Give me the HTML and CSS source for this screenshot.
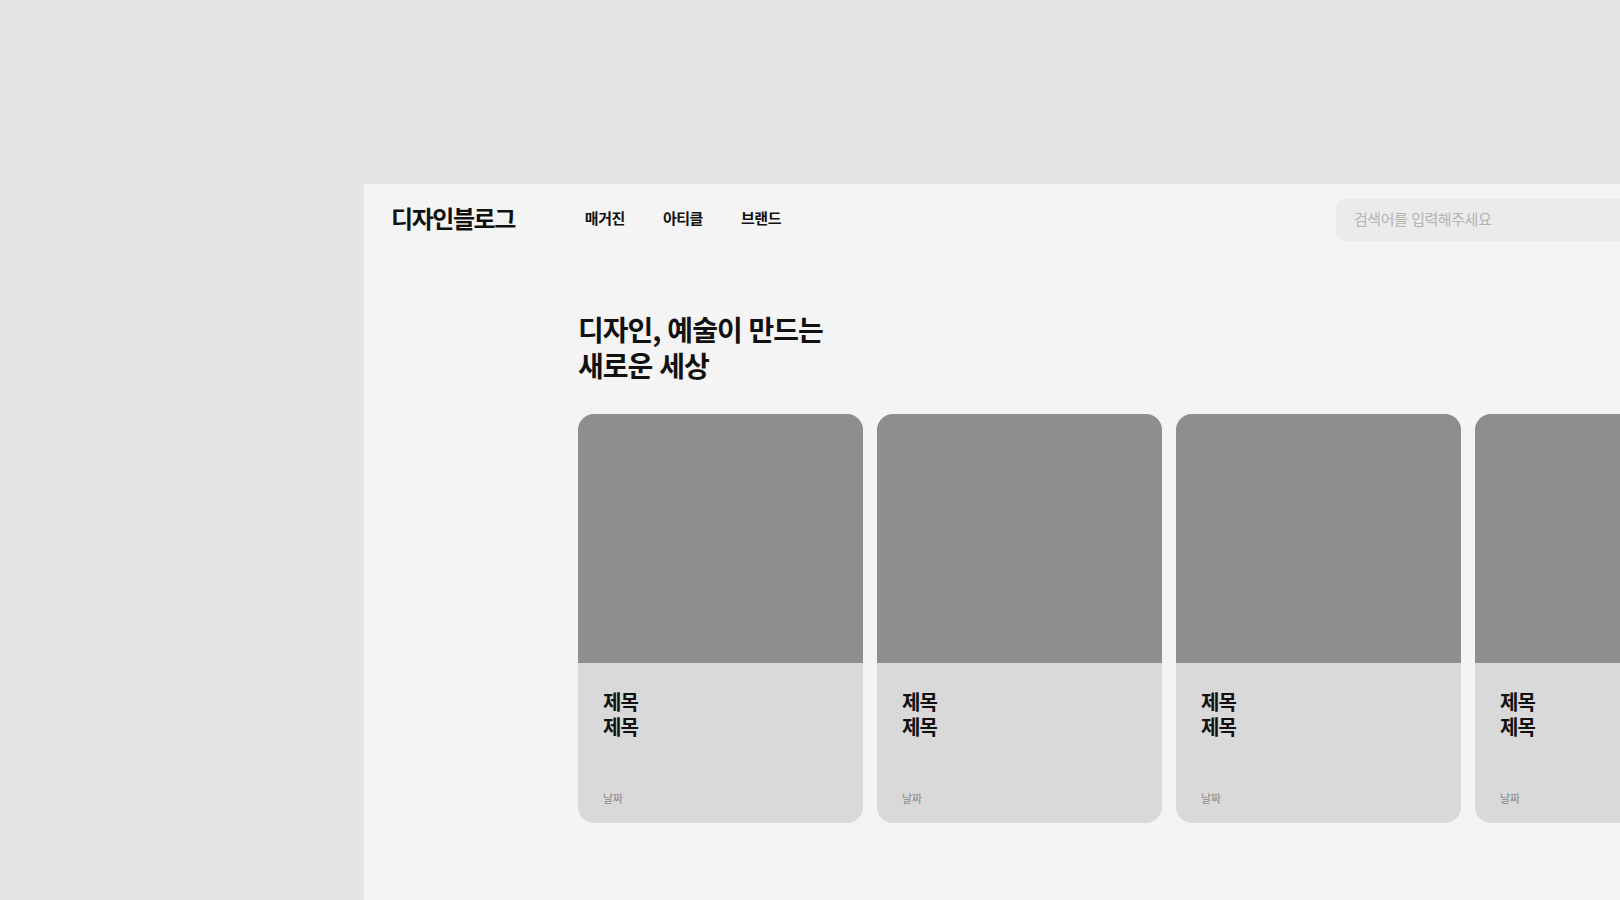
FILE: index.html
```html
<!DOCTYPE html>
<html lang="ko">
<head>
<meta charset="utf-8">
<title>디자인블로그</title>
<link rel="stylesheet" href="styles.css">
</head>
<body>
<div class="panel">
  <header class="header">
    <div class="logo">디자인블로그</div>
    <nav class="nav">
      <a class="nav-item">매거진</a>
      <a class="nav-item">아티클</a>
      <a class="nav-item">브랜드</a>
    </nav>
    <div class="search"><input class="search-input" type="text" placeholder="검색어를 입력해주세요"></div>
  </header>
  <main class="main">
    <h1 class="headline"><span class="headline-line">디자인, 예술이 만드는</span><span class="headline-line">새로운 세상</span></h1>
    <div class="cards">
      <div class="card"><div class="thumb"></div><div class="card-body"><div class="card-title"><span class="title-line">제목</span><span class="title-line">제목</span></div><div class="card-date">날짜</div></div></div>
      <div class="card"><div class="thumb"></div><div class="card-body"><div class="card-title"><span class="title-line">제목</span><span class="title-line">제목</span></div><div class="card-date">날짜</div></div></div>
      <div class="card"><div class="thumb"></div><div class="card-body"><div class="card-title"><span class="title-line">제목</span><span class="title-line">제목</span></div><div class="card-date">날짜</div></div></div>
      <div class="card"><div class="thumb"></div><div class="card-body"><div class="card-title"><span class="title-line">제목</span><span class="title-line">제목</span></div><div class="card-date">날짜</div></div></div>
    </div>
  </main>
</div>
</body>
</html>
```

FILE: styles.css
```css
html, body {
  margin: 0;
  padding: 0;
}
body {
  width: 1620px;
  height: 900px;
  overflow: hidden;
  background: #e3e4e6;
  font-family: "Noto Sans CJK KR", "Noto Sans", sans-serif;
  color: #111;
}
.panel {
  margin-left: 364px;
  margin-top: 184px;
  width: 1440px;
  height: 716px;
  background: #f4f4f4;
}
.header {
  display: flex;
  align-items: center;
  padding: 15px 0 0 27px;
  height: 42px;
}
.logo {
  font-size: 24px;
  line-height: 30px;
  font-weight: 700;
  letter-spacing: -0.06em;
  margin-right: 70px;
  margin-bottom: 4px;
}
.nav {
  display: flex;
  gap: 38px;
  margin-bottom: 4px;
}
.nav-item {
  font-size: 15px;
  line-height: 20px;
  font-weight: 700;
  letter-spacing: -0.03em;
  color: #111;
}
.search {
  margin-left: auto;
  margin-right: 28px;
  width: 440px;
  height: 42px;
  border-radius: 7px;
  background: #ebebeb;
  display: flex;
  align-items: center;
}
.search-input {
  border: none;
  outline: none;
  background: transparent;
  padding: 0 18px 4px;
  width: 100%;
  font-family: inherit;
  font-size: 15px;
  letter-spacing: -0.03em;
}
.search-input::placeholder {
  color: #b3b3b3;
}
.main {
  padding-left: 214px;
}
.headline {
  margin: 70px 0 0;
  font-size: 28px;
  line-height: 36px;
  font-weight: 700;
  letter-spacing: -0.035em;
}
.headline-line {
  display: block;
  height: 36px;
}
.cards {
  display: flex;
  gap: 14px;
  margin-top: 31px;
}
.card {
  flex-shrink: 0;
  width: 285px;
  height: 409px;
  border-radius: 16px;
  overflow: hidden;
  background: #d9d9d9;
  display: flex;
  flex-direction: column;
}
.thumb {
  height: 249px;
  background: #8e8e8e;
}
.card-body {
  flex: 1;
  display: flex;
  flex-direction: column;
  justify-content: space-between;
  padding: 26px 25px 18px;
}
.card-title {
  font-size: 20px;
  line-height: 25px;
  font-weight: 700;
  letter-spacing: -0.05em;
}
.title-line {
  display: block;
  height: 25px;
}
.card-date {
  font-size: 11px;
  line-height: 14px;
  color: #8a8a8a;
  letter-spacing: -0.04em;
}
```
